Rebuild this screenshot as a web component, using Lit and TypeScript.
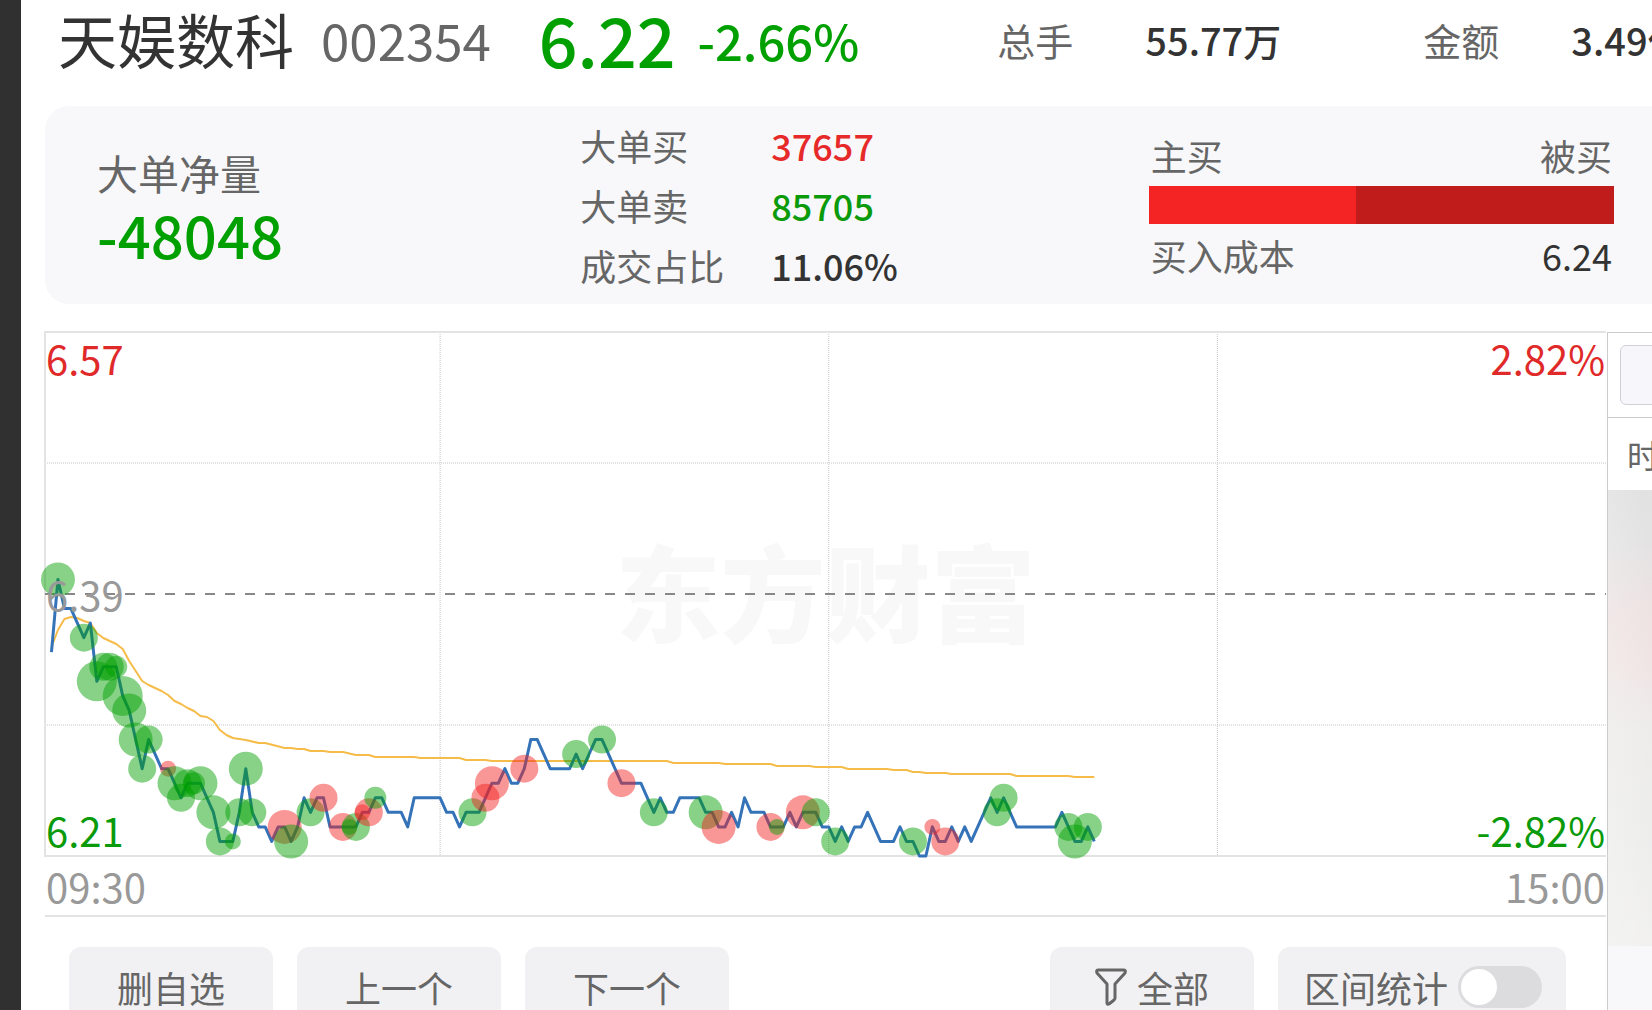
import { LitElement, html, svg, css } from "lit";
import { customElement, state } from "lit/decorators.js";

/* Plot units: 1561 wide for 241 one-minute slots, 524 tall for 36 price ticks. */
const PLOT_W = 1561;
const PLOT_H = 524;
const SLOT = PLOT_W / 241;
const TICK = PLOT_H / 36;

/* Price of each minute, in ticks of 0.01 above 6.21. */
const PRICES = [
  14, 19, 17, 17, 16, 15, 16, 12, 13, 13, 13, 11, 10, 8, 6, 8, 7, 6, 6, 5,
  4, 5, 5, 5, 4, 3, 1, 1, 1, 3, 6, 3, 2, 2, 1, 2, 2, 1, 2, 4,
  3, 4, 4, 2, 2, 2, 2, 2, 3, 3, 4, 4, 3, 3, 3, 2, 4, 4, 4, 4,
  4, 3, 3, 2, 3, 3, 3, 4, 5, 5, 6, 5, 5, 6, 8, 8, 7, 6, 6, 6,
  6, 7, 6, 7, 8, 8, 7, 6, 5, 5, 5, 5, 4, 3, 4, 3, 3, 4, 4, 4,
  4, 3, 3, 2, 2, 3, 2, 4, 3, 3, 3, 2, 2, 2, 3, 2, 3, 3, 3, 2,
  2, 1, 2, 1, 2, 2, 3, 2, 1, 1, 1, 2, 1, 1, 0, 0, 2, 1, 1, 2,
  1, 2, 1, 2, 3, 4, 3, 4, 3, 2, 2, 2, 2, 2, 2, 2, 3, 2, 1, 1,
  2, 1,
];

/* Average price line: [minute, height in plot units]. */
const AVERAGE: [number, number][] = [
  [0, 315], [1, 298], [2, 287], [3, 285], [4, 286], [5, 289], [6, 291],
  [7, 301], [8, 306], [9, 309], [10, 312], [11, 317], [12, 329], [13, 339],
  [14, 349], [15, 353], [16, 356], [17, 359], [18, 363], [19, 369],
  [20, 372], [21, 376], [22, 379], [23, 384], [24, 385], [25, 389],
  [26, 398], [27, 403], [28, 406], [29, 407], [30, 408], [32, 411],
  [33, 411], [36, 416], [37, 416], [38, 417], [39, 417], [40, 419],
  [42, 419], [43, 420], [45, 420], [47, 423], [49, 423], [50, 425],
  [56, 425], [57, 426], [63, 426], [64, 428], [67, 428], [68, 429],
  [95, 429], [96, 431], [103, 431], [104, 432], [111, 432], [112, 434],
  [117, 434], [118, 435], [122, 435], [123, 437], [129, 437], [130, 438],
  [132, 438], [133, 440], [134, 440], [135, 441], [138, 441], [139, 442],
  [148, 442], [149, 444], [157, 444], [158, 445], [161, 445],
];

/* Large orders: [minute, radius, side]. */
const ORDERS: [number, number, "buy" | "sell"][] = [
  [1, 17, "sell"], [5, 14, "sell"], [7, 20, "sell"], [8, 14, "sell"],
  [9, 14, "sell"], [10, 11, "sell"], [11, 20, "sell"], [12, 17, "sell"],
  [13, 17, "sell"], [14, 14, "sell"], [15, 14, "sell"], [18, 8, "buy"],
  [19, 17, "sell"], [20, 14, "sell"], [21, 14, "sell"], [22, 11, "sell"],
  [23, 17, "sell"], [25, 17, "sell"], [26, 14, "sell"], [28, 8, "sell"],
  [29, 14, "sell"], [30, 17, "sell"], [31, 14, "sell"], [36, 17, "buy"],
  [37, 17, "sell"], [40, 14, "sell"], [42, 14, "buy"], [45, 14, "buy"],
  [46, 8, "sell"], [47, 14, "sell"], [48, 8, "buy"], [49, 14, "buy"],
  [50, 11, "sell"], [65, 14, "sell"], [67, 14, "buy"], [68, 17, "buy"],
  [73, 14, "buy"], [81, 14, "sell"], [85, 14, "sell"], [88, 14, "buy"],
  [93, 14, "sell"], [101, 17, "sell"], [103, 17, "buy"], [111, 14, "buy"],
  [112, 8, "sell"], [116, 17, "buy"], [118, 14, "sell"], [121, 14, "sell"],
  [133, 14, "sell"], [136, 8, "buy"], [138, 14, "buy"], [146, 14, "sell"],
  [147, 14, "sell"], [157, 14, "sell"], [158, 17, "sell"], [160, 14, "sell"],
];

const slotX = (minute: number) => (minute + 1) * SLOT;
const tickY = (ticks: number) => PLOT_H - ticks * TICK;

@customElement("minute-chart")
export class MinuteChart extends LitElement {
  static styles = css`
    :host {
      display: block;
    }
    .plot {
      position: relative;
    }
    .canvas {
      position: relative;
      display: block;
      width: 100%;
      height: auto;
      overflow: visible;
    }
    .frame {
      fill: none;
      stroke: #e3e3e3;
      stroke-width: 2;
    }
    .grid {
      stroke: #c4c4c4;
      stroke-width: 1;
      stroke-dasharray: 1 1;
    }
    .close {
      stroke: #888;
      stroke-width: 2;
      stroke-dasharray: 10 10;
    }
    .average {
      fill: none;
      stroke: #f5bc4a;
      stroke-width: 2;
      stroke-linejoin: round;
    }
    .price {
      fill: none;
      stroke: #3573b9;
      stroke-width: 3;
      stroke-linejoin: round;
    }
    .buy {
      fill: #f22020;
      fill-opacity: 0.47;
    }
    .sell {
      fill: #00a000;
      fill-opacity: 0.47;
    }
    .watermark {
      position: absolute;
      inset: 0;
      display: flex;
      align-items: center;
      justify-content: center;
      padding-bottom: 12px;
      font-size: 105px;
      font-weight: 900;
      line-height: 120px;
      color: #f8f8f8;
    }
    .mark {
      position: absolute;
      font-size: 40px;
      line-height: 50px;
    }
    .left {
      left: 1px;
    }
    .right {
      right: 1px;
    }
    .top {
      top: 1px;
    }
    .middle {
      top: calc(50% - 25px);
      color: #999;
    }
    .bottom {
      bottom: 1px;
    }
    .up {
      color: #e02a2a;
    }
    .down {
      color: #0a9a0a;
    }
    .times {
      display: flex;
      justify-content: space-between;
      padding: 1px 1px 0;
      border-bottom: 2px solid #e3e3e3;
      font-size: 40px;
      line-height: 58px;
      color: #999;
    }
  `;

  render() {
    const price = PRICES.map((p, i) => `${slotX(i)},${tickY(p)}`).join(" ");
    const average = AVERAGE.map(([m, y]) => `${slotX(m)},${y}`).join(" ");
    return html`
      <div class="plot">
        <div class="watermark">东方财富</div>
        <svg
          class="canvas"
          viewBox="0 0 ${PLOT_W} ${PLOT_H}"
          role="img"
          aria-label="分时走势"
        >
          ${[9, 27].map(
            (t) => svg`<line class="grid" x1="0" x2=${PLOT_W} y1=${tickY(t)} y2=${tickY(t)} />`
          )}
          ${[60, 120, 180].map(
            (m) => svg`<line class="grid" x1=${slotX(m)} x2=${slotX(m)} y1="0" y2=${PLOT_H} />`
          )}
          <path class="frame" d="M${PLOT_W} 0H0V${PLOT_H}H${PLOT_W}" />
          <line class="close" x1="0" x2=${PLOT_W} y1=${tickY(18)} y2=${tickY(18)} />
          <polyline class="average" points=${average} />
          <polyline class="price" points=${price} />
          ${ORDERS.map(
            ([m, r, side]) =>
              svg`<circle class=${side} cx=${slotX(m)} cy=${tickY(PRICES[m])} r=${r} />`
          )}
        </svg>
        <span class="mark left top up">6.57</span>
        <span class="mark right top up">2.82%</span>
        <span class="mark left middle">6.39</span>
        <span class="mark left bottom down">6.21</span>
        <span class="mark right bottom down">-2.82%</span>
      </div>
      <div class="times"><span>09:30</span><span>15:00</span></div>
    `;
  }
}

@customElement("app-root")
export class AppRoot extends LitElement {
  static styles = css`
    :host {
      display: flex;
      height: 100vh;
      overflow: hidden;
      background: #fff;
      color: #333;
      font-family: "Noto Sans CJK SC", "Noto Sans", sans-serif;
    }
    .edge {
      flex: 0 0 21px;
      background: #303030;
    }
    .page {
      flex: 1;
      min-width: 0;
      display: flex;
      flex-direction: column;
      padding-left: 24px;
    }
    .quote {
      display: flex;
      align-items: center;
      height: 78px;
      padding-left: 13px;
      margin-bottom: 28px;
      white-space: nowrap;
    }
    .name {
      margin: 0;
      font-size: 59px;
      font-weight: 400;
      line-height: 76px;
    }
    .code {
      margin-left: 27px;
      font-size: 51px;
      color: #666;
    }
    .last {
      margin-left: 48px;
      font-size: 68px;
      font-weight: 500;
      line-height: 76px;
      color: #00a000;
    }
    .change {
      margin-left: 22px;
      font-size: 49px;
      font-weight: 500;
      color: #00a000;
    }
    .totals {
      flex: 1;
      display: flex;
      margin: 0 0 0 138px;
      font-size: 38px;
    }
    .total {
      flex: 0 0 426px;
      display: flex;
      align-items: center;
    }
    .total dt {
      flex: 0 0 148px;
      color: #666;
    }
    .total dd {
      margin: 0;
      font-size: 38px;
      font-weight: 500;
    }
    .summary {
      display: grid;
      grid-template-columns: 483fr 568fr 465fr;
      align-items: center;
      height: 198px;
      padding: 0 38px 0 52px;
      margin-bottom: 28px;
      border-radius: 24px 0 0 24px;
      background: #f8f8fa;
      color: #666;
      font-size: 36px;
    }
    .net {
      padding-top: 3px;
    }
    .net-label {
      font-size: 41px;
      line-height: 54px;
    }
    .net-value {
      font-size: 58px;
      font-weight: 500;
      line-height: 70px;
      color: #00a000;
    }
    .deals {
      display: grid;
      grid-template-columns: 191px 1fr;
      margin: 0;
      line-height: 60px;
    }
    .deals dd {
      margin: 0;
      font-weight: 500;
    }
    .red {
      color: #e62a2a;
    }
    .green {
      color: #0a9a0a;
    }
    .dark {
      color: #333;
    }
    .pair {
      display: flex;
      justify-content: space-between;
      padding: 0 2px;
      line-height: 62px;
    }
    .bar {
      display: flex;
      height: 38px;
      background: #c11c1c;
    }
    .bar-part {
      background: #f42424;
    }
    .body {
      flex: 1;
      min-height: 0;
      display: flex;
    }
    .main {
      flex: 1;
      min-width: 0;
    }
    .actions {
      display: flex;
      gap: 24px;
      padding: 30px 40px 0 24px;
    }
    .action {
      display: flex;
      align-items: center;
      justify-content: center;
      box-sizing: border-box;
      min-width: 204px;
      height: 80px;
      padding: 0 24px;
      border: 0;
      border-radius: 12px;
      background: #f1f1f3;
      color: #666;
      font: inherit;
      font-size: 36px;
      line-height: 48px;
      white-space: nowrap;
    }
    .filter {
      gap: 10px;
      margin-left: auto;
    }
    .funnel {
      width: 32px;
      height: 38px;
      fill: none;
      stroke: #666;
      stroke-width: 3;
      stroke-linejoin: round;
    }
    .range {
      gap: 10px;
      padding-left: 26px;
    }
    .switch {
      appearance: none;
      box-sizing: border-box;
      width: 84px;
      height: 42px;
      margin: 0;
      padding: 3px;
      border-radius: 21px;
      background: #dcdcde;
    }
    .switch::before {
      content: "";
      display: block;
      width: 36px;
      height: 36px;
      border-radius: 50%;
      background: #fff;
    }
    .switch:checked::before {
      margin-left: auto;
    }
    .side {
      flex: 0 0 45px;
      box-sizing: border-box;
      display: flex;
      flex-direction: column;
      margin-left: 1px;
      border: solid #ccc;
      border-width: 1px 0 0 1px;
      overflow: hidden;
      background: #f8f8fb;
    }
    .side-top {
      padding: 12px 0 12px 12px;
      border-bottom: 1px solid #ccc;
      background: #fff;
    }
    .side-button {
      display: block;
      width: 180px;
      height: 60px;
      border: 1px solid #d0d0d6;
      border-radius: 6px;
      background: #f7f7fb;
    }
    .side-head {
      padding-left: 19px;
      background: #fff;
      color: #666;
      font-size: 32px;
      line-height: 72px;
      white-space: nowrap;
    }
    .veil {
      height: 456px;
      background:
        linear-gradient(80deg, rgba(245, 245, 243, 0.8), rgba(236, 236, 236, 0) 90%),
        linear-gradient(#e2e2e3, #e4e3e4 12%, #eee1e1 28%, #efe2e1 38%, #ebe9e9 52%, #e9e9e9 75%, #edecec);
    }
  `;

  @state() private ranged = false;

  render() {
    return html`
      <div class="edge"></div>
      <div class="page">
        <header class="quote">
          <h1 class="name">天娱数科</h1>
          <span class="code">002354</span>
          <strong class="last">6.22</strong>
          <span class="change">-2.66%</span>
          <dl class="totals">
            <div class="total"><dt>总手</dt><dd>55.77万</dd></div>
            <div class="total"><dt>金额</dt><dd>3.49亿</dd></div>
          </dl>
        </header>

        <section class="summary">
          <div class="net">
            <div class="net-label">大单净量</div>
            <div class="net-value">-48048</div>
          </div>
          <dl class="deals">
            <dt>大单买</dt><dd class="red">37657</dd>
            <dt>大单卖</dt><dd class="green">85705</dd>
            <dt>成交占比</dt><dd class="dark">11.06%</dd>
          </dl>
          <div>
            <div class="pair"><span>主买</span><span>被买</span></div>
            <div class="bar"><div class="bar-part" style="width: 44.6%"></div></div>
            <div class="pair"><span>买入成本</span><span class="dark">6.24</span></div>
          </div>
        </section>

        <div class="body">
          <main class="main">
            <minute-chart></minute-chart>
            <div class="actions">
              <button class="action">删自选</button>
              <button class="action">上一个</button>
              <button class="action">下一个</button>
              <button class="action filter">
                <svg class="funnel" viewBox="0 0 32 38" aria-hidden="true">
                  <path d="M3 2H29Q31 2 30 5L20 16V30Q20 31 19 32L14 36Q12 37 12 35V16L2 5Q1 2 3 2Z" />
                </svg>
                全部
              </button>
              <label class="action range">
                区间统计
                <input
                  class="switch"
                  type="checkbox"
                  role="switch"
                  .checked=${this.ranged}
                  @change=${(e: Event) => {
                    this.ranged = (e.target as HTMLInputElement).checked;
                  }}
                />
              </label>
            </div>
          </main>
          <aside class="side">
            <div class="side-top"><button class="side-button" aria-label="筛选"></button></div>
            <div class="side-head">时间</div>
            <div class="veil"></div>
          </aside>
        </div>
      </div>
    `;
  }
}
